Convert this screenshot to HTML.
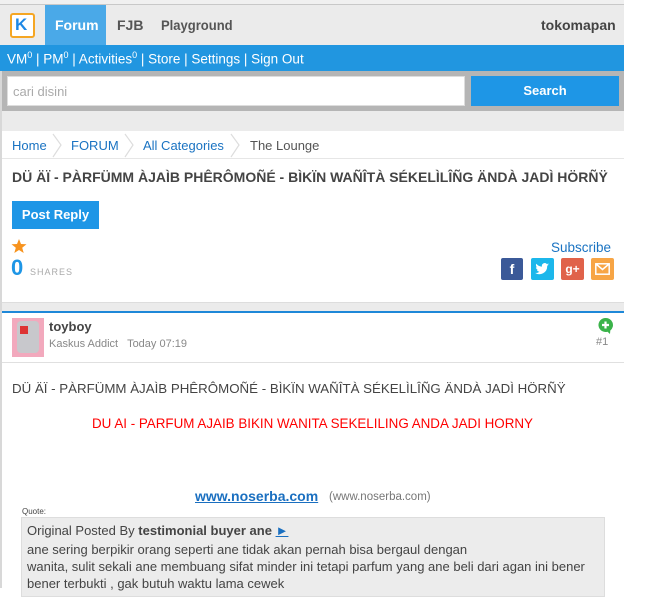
<!DOCTYPE html>
<html><head><meta charset="utf-8">
<style>
*{margin:0;padding:0;box-sizing:border-box}
body{width:651px;height:588px;overflow:hidden;background:#fff;font-family:"Liberation Sans",Arial,sans-serif;position:relative}
.a{position:absolute;white-space:nowrap}
</style></head><body>
<div class="a" style="left:0;top:0;width:624px;height:588px;background:#fff;border-left:2px solid #d8d8d8"></div>
<div class="a" style="left:0;top:0;width:624px;height:5px;background:#f0f0f0;border-bottom:1px solid #c8c8c8"></div>
<!-- header -->
<div class="a" style="left:0;top:5px;width:624px;height:40px;background:#ebebeb"></div>
<div class="a" style="left:10px;top:13px;width:25px;height:25px;border:2px solid #f5a623;border-radius:3px;background:#fff"></div>
<div class="a" style="left:15px;top:15px;font:bold 17px 'Liberation Sans';color:#1e88e5">K</div>
<div class="a" style="left:45px;top:5px;width:61px;height:40px;background:#4aa9e8"></div>
<div class="a" style="left:55px;top:17px;font:bold 14px 'Liberation Sans';color:#fff">Forum</div>
<div class="a" style="left:117px;top:17px;font:bold 14px 'Liberation Sans';color:#555">FJB</div>
<div class="a" style="left:161px;top:17px;font:bold 14px 'Liberation Sans';color:#555;display:inline-block;transform:scaleX(0.93);transform-origin:left">Playground</div>
<div class="a" style="left:541px;top:17px;font:bold 14px 'Liberation Sans';color:#444">tokomapan</div>
<!-- blue bar -->
<div class="a" style="left:0;top:45px;width:624px;height:26px;background:#2196e0"></div>
<div class="a" style="left:7px;top:50px;font:13.5px 'Liberation Sans';color:#fff">VM<sup style="font-size:9px">0</sup> | PM<sup style="font-size:9px">0</sup> | Activities<sup style="font-size:9px">0</sup> | Store | Settings | Sign Out</div>
<!-- search -->
<div class="a" style="left:2px;top:71px;width:622px;height:40px;background:#b5b5b5"></div>
<div class="a" style="left:7px;top:76px;width:458px;height:30px;background:#fff;border:1px solid #ddd"></div>
<div class="a" style="left:13px;top:84px;font:13px 'Liberation Sans';color:#aaa">cari disini</div>
<div class="a" style="left:471px;top:76px;width:148px;height:30px;background:#1e96e6;color:#fff;font:bold 13px 'Liberation Sans';text-align:center;line-height:29px">Search</div>
<div class="a" style="left:2px;top:111px;width:622px;height:20px;background:#ebebeb"></div>
<!-- breadcrumb -->
<div class="a" style="left:12px;top:138px;font:13px 'Liberation Sans';color:#1a73c2">Home</div>
<div class="a" style="left:71px;top:138px;font:13px 'Liberation Sans';color:#1a73c2">FORUM</div>
<div class="a" style="left:143px;top:138px;font:13px 'Liberation Sans';color:#1a73c2">All Categories</div>
<div class="a" style="left:250px;top:138px;font:13px 'Liberation Sans';color:#555">The Lounge</div>
<svg class="a" style="left:0;top:131px" width="300" height="28"><g fill="none" stroke="#ddd" stroke-width="1.2"><path d="M53 3 L61 14 L53 26"/><path d="M125 3 L133 14 L125 26"/><path d="M231 3 L239 14 L231 26"/></g></svg>
<div class="a" style="left:2px;top:158px;width:622px;height:1px;background:#e6e6e6"></div>
<div class="a" style="left:12px;top:169px;font:bold 14px 'Liberation Sans';color:#444;display:inline-block;transform:scaleX(1.0);transform-origin:left">DÜ ÄÏ - PÀRFÜMM ÀJAÌB PHÊRÔMOÑÉ - BÌKÏN WAÑÎTÀ SÉKELÌLÎÑG ÄNDÀ JADÌ HÖRÑŸ</div>
<div class="a" style="left:12px;top:201px;width:87px;height:28px;background:#1e96e6;color:#fff;font:bold 13px 'Liberation Sans';text-align:center;line-height:28px">Post Reply</div>
<!-- shares -->
<svg class="a" style="left:11px;top:239px" width="16" height="15"><path d="M8 0 L10 5 L15.5 5.3 L11.2 8.7 L12.7 14 L8 11 L3.3 14 L4.8 8.7 L0.5 5.3 L6 5 Z" fill="#f7931e"/></svg>
<div class="a" style="left:11px;top:255px;color:#1e96e6;font:bold 22px 'Liberation Sans'">0</div>
<div class="a" style="left:30px;top:267px;color:#aaa;font:9px 'Liberation Sans';letter-spacing:1px">SHARES</div>
<div class="a" style="left:551px;top:240px;font:13.5px 'Liberation Sans';color:#1a73c2">Subscribe</div>
<div class="a" style="left:501px;top:258px;width:22px;height:22px;background:#3b5998;border-radius:2px;color:#fff;font:bold 14px 'Liberation Sans';text-align:center;line-height:22px">f</div>
<div class="a" style="left:531px;top:258px;width:23px;height:22px;background:#1cb7eb;border-radius:2px"></div>
<svg class="a" style="left:535px;top:262px" width="15" height="14"><path d="M14 2.5c-.5.2-1 .4-1.6.4.6-.4 1-.9 1.2-1.5-.5.3-1.1.5-1.7.7A2.8 2.8 0 0 0 7 4.6 7.9 7.9 0 0 1 1.3 1.7a2.8 2.8 0 0 0 .9 3.7c-.5 0-.9-.1-1.3-.3 0 1.3 1 2.5 2.2 2.7-.4.1-.9.1-1.3 0 .4 1.1 1.4 1.9 2.6 1.9A5.6 5.6 0 0 1 0 10.9 7.9 7.9 0 0 0 12.2 4.2v-.4c.7-.4 1.2-.9 1.8-1.3z" fill="#fff"/></svg>
<div class="a" style="left:561px;top:258px;width:23px;height:22px;background:#e0624a;border-radius:2px;color:#fff;font:bold 12px 'Liberation Sans';text-align:center;line-height:22px">g+</div>
<div class="a" style="left:591px;top:258px;width:23px;height:22px;background:#f7a545;border-radius:2px"></div>
<svg class="a" style="left:595px;top:263px" width="15" height="12"><rect x="0.8" y="0.8" width="13.4" height="10.4" fill="none" stroke="#fff" stroke-width="1.5"/><path d="M1 1 L7.5 6.5 L14 1" fill="none" stroke="#fff" stroke-width="1.5"/></svg>
<!-- separator -->
<div class="a" style="left:2px;top:302px;width:622px;height:11px;background:#ebebeb;border-top:1px solid #ddd;border-bottom:2px solid #1e88d8"></div>
<!-- post header -->
<div class="a" style="left:12px;top:318px;width:32px;height:39px;background:#f2a9bd"></div>
<div class="a" style="left:17px;top:321px;width:22px;height:32px;background:#c8c8cc;border-radius:4px"></div>
<div class="a" style="left:20px;top:326px;width:8px;height:8px;background:#d33"></div>
<div class="a" style="left:49px;top:319px;font:bold 13px 'Liberation Sans';color:#444">toyboy</div>
<div class="a" style="left:49px;top:338px;font:11px 'Liberation Sans';color:#888">Kaskus Addict &nbsp; Today 07:19</div>
<svg class="a" style="left:597px;top:317px" width="17" height="18"><path d="M8.5 1a7 7 0 1 0 2 13.7L13 17l.3-3.5A7 7 0 0 0 8.5 1z" fill="#3bb34a"/><path d="M8.5 4.5v7M5 8h7" stroke="#fff" stroke-width="2.2"/></svg>
<div class="a" style="left:596px;top:336px;font:11px 'Liberation Sans';color:#888">#1</div>
<div class="a" style="left:2px;top:362px;width:622px;height:1px;background:#e0e0e0"></div>
<div class="a" style="left:12px;top:381px;font:13.3px 'Liberation Sans';color:#444">DÜ ÄÏ - PÀRFÜMM ÀJAÌB PHÊRÔMOÑÉ - BÌKÏN WAÑÎTÀ SÉKELÌLÎÑG ÄNDÀ JADÌ HÖRÑŸ</div>
<div class="a" style="left:92px;top:416px;font:13.4px 'Liberation Sans';color:#f00">DU AI - PARFUM AJAIB BIKIN WANITA SEKELILING ANDA JADI HORNY</div>
<div class="a" style="left:195px;top:488px;font:bold 14px 'Liberation Sans';color:#1a6fc0;text-decoration:underline">www.noserba.com</div>
<div class="a" style="left:329px;top:491px;font:11.5px 'Liberation Sans';color:#777">(www.noserba.com)</div>
<div class="a" style="left:22px;top:507px;font:8px 'Liberation Sans';color:#444">Quote:</div>
<div class="a" style="left:21px;top:517px;width:584px;height:80px;background:#ececec;border:1px solid #ddd"></div>
<div class="a" style="left:27px;top:523px;font:13px 'Liberation Sans';color:#444">Original Posted By <b>testimonial buyer ane</b> <span style="color:#1a6fc0;text-decoration:underline">►</span></div>
<div class="a" style="left:27px;top:541px;font:13px 'Liberation Sans';color:#444;line-height:17px">ane sering berpikir orang seperti ane tidak akan pernah bisa bergaul dengan<br>wanita, sulit sekali ane membuang sifat minder ini tetapi parfum yang ane beli dari agan ini bener<br>bener terbukti , gak butuh waktu lama cewek</div>
</body></html>
